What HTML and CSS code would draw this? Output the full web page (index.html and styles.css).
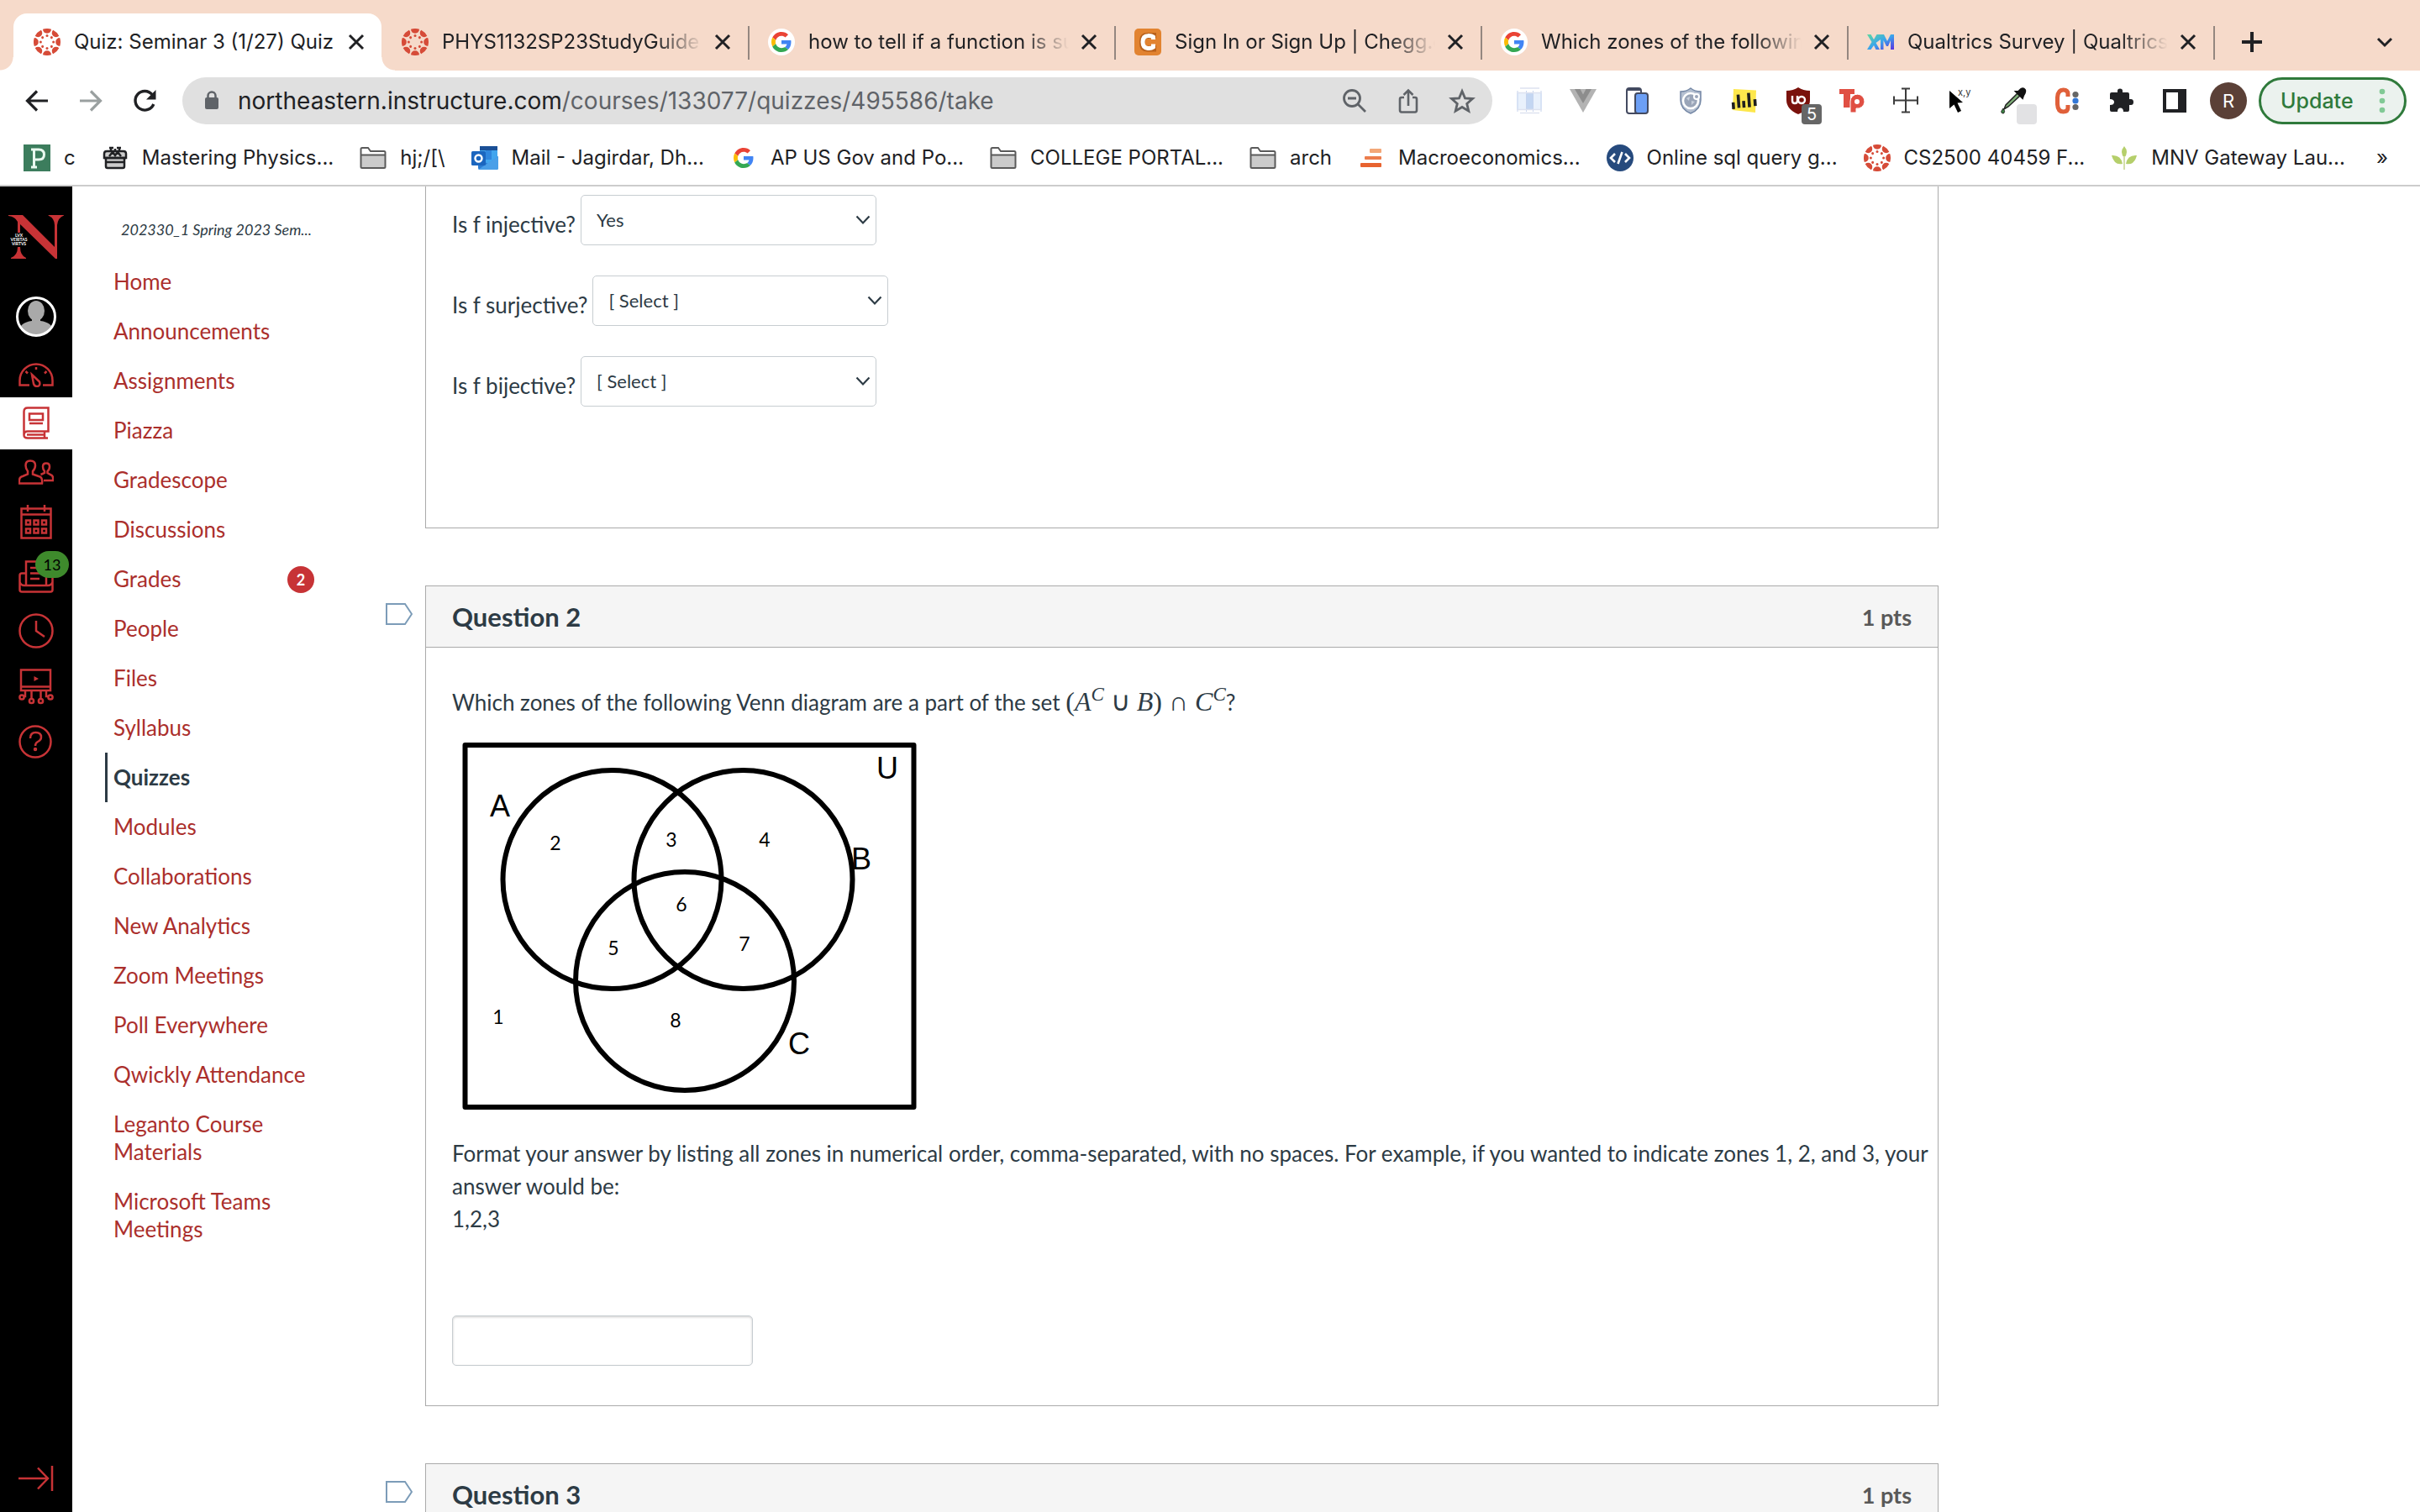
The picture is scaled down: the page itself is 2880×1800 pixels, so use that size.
FILE: index.html
```html
<!DOCTYPE html>
<html lang="en">
<head>
<meta charset="utf-8">
<meta name="viewport" content="width=device-width, initial-scale=1">
<title>Quiz: Seminar 3 (1/27) Quiz</title>
<link rel="stylesheet" href="styles.css">
</head>
<body>
<svg class="sprite" aria-hidden="true">
  <defs>
    <g id="lobe"><path d="M-5 -15.2A16 16 0 0 1 5 -15.2A5 5 0 0 1 -5 -15.2Z"/><circle cy="-7.6" r="1.5"/></g>
    <symbol id="canvas" viewBox="-16 -16 32 32">
      <g fill="#d64b38">
        <use href="#lobe"/><use href="#lobe" transform="rotate(45)"/><use href="#lobe" transform="rotate(90)"/><use href="#lobe" transform="rotate(135)"/>
        <use href="#lobe" transform="rotate(180)"/><use href="#lobe" transform="rotate(225)"/><use href="#lobe" transform="rotate(270)"/><use href="#lobe" transform="rotate(315)"/>
      </g>
    </symbol>
    <symbol id="google" viewBox="0 0 48 48">
      <path fill="#ea4335" d="M24 9.500c3.540 0 6.710 1.220 9.210 3.600l6.850-6.850C35.900 2.380 30.470 0 24 0 14.620 0 6.510 5.380 2.560 13.220l7.980 6.190C12.430 13.720 17.740 9.500 24 9.500z"/>
      <path fill="#4285f4" d="M46.980 24.550c0-1.570-.15-3.090-.38-4.550H24v9.020h12.940c-.58 2.960-2.260 5.480-4.780 7.180l7.730 6c4.510-4.180 7.090-10.360 7.090-17.650z"/>
      <path fill="#fbbc05" d="M10.530 28.590c-.48-1.450-.76-2.990-.76-4.590s.27-3.140.76-4.590l-7.980-6.190C.92 16.460 0 20.120 0 24c0 3.880.92 7.540 2.560 10.780z"/>
      <path fill="#34a853" d="M24 48c6.480 0 11.930-2.130 15.890-5.810l-7.730-6c-2.150 1.450-4.920 2.300-8.160 2.300-6.260 0-11.570-4.220-13.470-9.910l-7.980 6.190C6.510 42.620 14.620 48 24 48z"/>
    </symbol>
    <symbol id="google-round" viewBox="0 0 32 32"><circle cx="16" cy="16" r="16" fill="#fff"/><use href="#google" x="4" y="4" width="24" height="24"/></symbol>
    <symbol id="close" viewBox="0 0 32 32"><path d="M8 8L24 24M24 8L8 24" stroke="#202124" stroke-width="3" fill="none"/></symbol>
    <symbol id="folder" viewBox="0 0 32 32"><path d="M1.500 27V5.500Q1.500 4 3 4H10L13 8H29Q30.500 8 30.500 9.500V27Q30.500 28 29 28H3Q1.500 28 1.500 27Z" fill="#cbcbcb"/><path d="M2 5H10L13 8.500H30V12H2Z" fill="#fff"/><path d="M1.500 26V5.500Q1.500 4 3 4H10L13 8H29Q30.500 8 30.500 9.500V26.500Q30.500 28 29 28H3Q1.500 28 1.500 26.500ZM2 12.500H30" fill="none" stroke="#5a5a5a" stroke-width="2"/></symbol>
    <symbol id="chevron" viewBox="0 0 18 12"><path d="M1.500 1.500L9 9.500L16.500 1.500" fill="none" stroke="#2d3b45" stroke-width="2.200"/></symbol>
  </defs>
</svg>

<header class="browser">
  <div class="tabs" role="tablist">
    <div class="tab active" role="tab" aria-selected="true"><svg class="i32"><use href="#canvas"/></svg><span class="tab-label">Quiz: Seminar 3 (1/27) Quiz</span><button class="plain" aria-label="Close tab"><svg class="i32"><use href="#close"/></svg></button></div>
    <div class="tab" role="tab"><svg class="i32"><use href="#canvas"/></svg><span class="tab-label">PHYS1132SP23StudyGuide</span><button class="plain" aria-label="Close tab"><svg class="i32"><use href="#close"/></svg></button></div>
    <div class="tab ruled" role="tab"><svg class="i32"><use href="#google-round"/></svg><span class="tab-label">how to tell if a function is su</span><button class="plain" aria-label="Close tab"><svg class="i32"><use href="#close"/></svg></button></div>
    <div class="tab ruled" role="tab"><svg class="i32" viewBox="0 0 32 32"><rect width="32" height="32" rx="5" fill="#e28330"/><path d="M22.500 11.500V8.500H15.500Q9.500 8.500 9.500 14.500V18Q9.500 24 15.500 24H22.500V20" fill="none" stroke="#b9611b" stroke-width="7"/><path d="M22.500 13V10Q20 8 16 8.500Q10 9 10 16Q10 23 16 23.500Q20 24 22.500 22V18.500" fill="none" stroke="#fff" stroke-width="5"/></svg><span class="tab-label">Sign In or Sign Up | Chegg.c</span><button class="plain" aria-label="Close tab"><svg class="i32"><use href="#close"/></svg></button></div>
    <div class="tab ruled" role="tab"><svg class="i32"><use href="#google-round"/></svg><span class="tab-label">Which zones of the followin</span><button class="plain" aria-label="Close tab"><svg class="i32"><use href="#close"/></svg></button></div>
    <div class="tab ruled" role="tab"><svg class="i32" viewBox="0 0 32 32"><defs><linearGradient id="xm" x1="0" y1="0" x2="1" y2="1"><stop offset="0" stop-color="#5fd8a0"/><stop offset=".5" stop-color="#3aa5ec"/><stop offset="1" stop-color="#5a2fe0"/></linearGradient></defs><path d="M0 7H4.500L8 13L11.500 7H20L24 15L28 7H32V25H28V14L25 21H23L19.500 14V25H16V13L10.500 17L15 25H10.500L8 20L4.500 25H0L5.500 16Z" fill="url(#xm)"/></svg><span class="tab-label">Qualtrics Survey | Qualtrics</span><button class="plain" aria-label="Close tab"><svg class="i32"><use href="#close"/></svg></button></div>
    <div class="tab-end">
      <button class="plain" aria-label="New tab"><svg class="i32" viewBox="0 0 32 32"><path d="M16 4V28M4 16H28" stroke="#202124" stroke-width="4"/></svg></button>
      <button class="plain" aria-label="Search tabs"><svg class="i32" viewBox="0 0 32 32"><path d="M8 12L16 20L24 12" fill="none" stroke="#202124" stroke-width="3"/></svg></button>
    </div>
  </div>

  <div class="toolbar">
    <div class="history">
      <button class="plain" aria-label="Back"><svg class="i32" viewBox="0 0 32 32"><path d="M29 16H5M16 4.500L4.500 16L16 27.500" fill="none" stroke="#202124" stroke-width="3.200"/></svg></button>
      <button class="plain" aria-label="Forward"><svg class="i32" viewBox="0 0 32 32"><path d="M3 16H27M16 4.500L27.500 16L16 27.500" fill="none" stroke="#9aa0a0" stroke-width="3.200"/></svg></button>
      <button class="plain" aria-label="Reload"><svg class="i32" viewBox="0 0 32 32"><path d="M25 8.500A11.300 11.300 0 1 0 26.800 20" fill="none" stroke="#202124" stroke-width="3.400"/><path d="M29.500 3V14.500H18Z" fill="#202124"/></svg></button>
    </div>
    <div class="omnibox">
      <svg class="lock" viewBox="0 0 18 24"><rect x="1" y="8" width="16" height="14" rx="2" fill="#5f6368"/><path d="M4.500 9V6A4.500 4.500 0 0 1 13.500 6V9" fill="none" stroke="#5f6368" stroke-width="2.500"/></svg>
      <span class="url">northeastern.instructure.com<span class="path">/courses/133077/quizzes/495586/take</span></span>
      <button class="plain" aria-label="Zoom"><svg class="i32" viewBox="0 0 32 32" fill="none" stroke="#5f6368" stroke-width="2.800"><circle cx="13" cy="13" r="9.500"/><path d="M8 13H18M20 20L29 29"/></svg></button>
      <button class="plain" aria-label="Share"><svg class="i32" viewBox="0 0 32 32" fill="none" stroke="#5f6368" stroke-width="2.600"><path d="M11 12H8Q6 12 6 14V27Q6 29.500 8 29.500H24Q26 29.500 26 27V14Q26 12 24 12H21M16 22V4M10.500 9L16 3.500L21.500 9"/></svg></button>
      <button class="plain" aria-label="Bookmark"><svg class="i32" viewBox="0 0 32 32"><path d="M16 4.500L19.500 12.800L28.500 13.500L21.700 19.400L23.800 28.200L16 23.500L8.200 28.200L10.300 19.400L3.500 13.500L12.500 12.800Z" fill="none" stroke="#5f6368" stroke-width="2.800"/></svg></button>
    </div>
    <div class="extensions">
      <button class="plain" aria-label="Page ruler"><svg class="i32" viewBox="0 0 32 32"><rect x="1" y="6" width="30" height="21" fill="#e9f1fc"/><path d="M12.500 6H20.500V27H12.500Z" fill="#c3d6f2"/><path d="M2 4V29M30 4V29M12.500 4V29M20.500 4V29" stroke="#c6d4ee" stroke-width="1"/><path d="M5 1H28M5 30.500H28M1 6.500H31M1 26.500H31" stroke="#dde2f0" stroke-width="1.500"/></svg></button>
      <button class="plain" aria-label="Vue devtools"><svg class="i32" viewBox="0 0 32 32"><path d="M0 2H32L16 30Z" fill="#b3b3b3"/><path d="M6 2H12.500L16 8.500L19.500 2H26L16 19Z" fill="#8d8d8d"/></svg></button>
      <button class="plain" aria-label="Responsive viewer"><svg class="i32" viewBox="0 0 32 32"><rect x="4" y="1" width="17" height="30" rx="3" fill="#fff" stroke="#434a60" stroke-width="2"/><path d="M4 2.500H20" stroke="#434a60" stroke-width="3"/><rect x="14" y="7" width="15" height="24" rx="3" fill="#6c9ff5" stroke="#434a60" stroke-width="2"/></svg></button>
      <button class="plain" aria-label="Privacy shield"><svg class="i32" viewBox="0 0 32 32"><path d="M16 1Q21 5 28 5V15Q28 26 16 31Q4 26 4 15V5Q11 5 16 1Z" fill="#b4bfd0" stroke="#7487a5" stroke-width="1.500"/><circle cx="16" cy="16" r="9" fill="#9aa5b8" stroke="#fff" stroke-width="2.500"/><path d="M11 13L15 11L14 16ZM17 16L21 17L17 21Z" fill="#c9d0dc"/><circle cx="23" cy="11" r="3" fill="#9aa5b8" stroke="#fff" stroke-width="2"/></svg></button>
      <button class="plain" aria-label="Analytics"><svg class="i32" viewBox="0 0 32 32"><path d="M3 2L30 3.500L29 30L2 27Z" fill="#fde74c"/><path d="M2.500 17V25M9 8V24M15 16V24M21.500 7V24M28.500 15V23" stroke="#1e1e1e" stroke-width="3.600" transform="rotate(-4 16 16)"/></svg></button>
      <button class="plain with-badge" aria-label="uBlock Origin, 5 blocked"><svg class="i32" viewBox="0 0 32 32"><path d="M16 0Q22 4 30 4V15Q30 26 16 32Q2 26 2 15V4Q10 4 16 0Z" fill="#7a120c"/><path d="M9 10V16Q9 19 12 19Q15 19 15 16V10" fill="none" stroke="#fff" stroke-width="2.400"/><circle cx="20" cy="15" r="4" fill="none" stroke="#fff" stroke-width="2.400"/></svg><span class="ext-badge">5</span></button>
      <button class="plain" aria-label="Toggl"><svg class="i32" viewBox="0 0 32 32"><path d="M1 2H19V8H14V24H6V8H1Z" fill="#e04f43"/><path d="M14 30V17A8.500 8.500 0 1 1 21 25V30Z" fill="#e04f43" stroke="#fff" stroke-width="1"/><circle cx="22" cy="17" r="3" fill="#fff"/></svg></button>
      <button class="plain" aria-label="Dimensions"><svg class="i32" viewBox="0 0 32 32"><path d="M16 1V30M1.500 15.500H30.500M11 1.500H21M11 29.500H21M2 10.500V20.500M30 10.500V20.500" stroke="#3c3c3c" stroke-width="2"/></svg></button>
      <button class="plain" aria-label="Coordinates"><svg class="i32" viewBox="0 0 32 32" overflow="visible"><path d="M4 4L20 18L13.500 18.500L18 28L14 30L9.500 20.500L4 25Z" fill="#000"/><text x="14" y="10" font-size="11" fill="#333" font-family="Inter, sans-serif">x,y</text></svg></button>
      <button class="plain with-badge" aria-label="Colour picker"><svg class="i32" viewBox="0 0 32 32"><path d="M21 7L7 21L5 26L10 23L24 10Z" fill="#7fae78" stroke="#222" stroke-width="1.500"/><path d="M19 5L27 13L28 10Q31 6 30 3Q28 0 25 2L22 5Z" fill="#111" stroke="#111" stroke-width="2"/><path d="M4 25Q7 29 4.500 31Q1 31 2 28Z" fill="#3d8b45" stroke="#222"/></svg><span class="ext-badge swatch"></span></button>
      <button class="plain" aria-label="Clockify"><svg class="i32" viewBox="0 0 32 32"><path d="M17 11V8Q17 3 11.500 3Q5 3 4.500 12V20Q5 29 11.500 29Q17 29 17 24V21" fill="none" stroke="#e0603a" stroke-width="5"/><circle cx="26" cy="8.500" r="3.600" fill="#666"/><circle cx="26" cy="16" r="3.600" fill="#3377d6"/><circle cx="26" cy="23.500" r="3.600" fill="#666"/></svg></button>
      <button class="plain" aria-label="Extensions"><svg class="i32" viewBox="0 0 32 32"><path d="M9 6H12V4Q12 1.500 15 1.500Q18 1.500 18 4V6H24Q26 6 26 8V14H28Q31 14 31 17.500Q31 21 28 21H26V27Q26 29 24 29H19Q19 24.500 15.500 24.500Q12 24.500 12 29H5Q3 29 3 27V21Q8 21 8 17.500Q8 14 3 14V8Q3 6 5 6Z" fill="#202124"/></svg></button>
      <button class="plain" aria-label="Side panel"><svg class="i32" viewBox="0 0 32 32"><path d="M2 2H30V30H2ZM6 6V26H20V6Z" fill="#202124" fill-rule="evenodd"/></svg></button>
    </div>
    <button class="avatar">R</button>
    <button class="update">Update<svg width="8" height="30" viewBox="0 0 8 30" fill="#81c995"><circle cx="4" cy="4" r="3.300"/><circle cx="4" cy="15" r="3.300"/><circle cx="4" cy="26" r="3.300"/></svg></button>
  </div>

  <nav class="bookmarks" aria-label="Bookmarks">
    <a href="#"><svg class="i32" viewBox="0 0 32 32"><rect width="32" height="32" fill="#3c7d5d"/><path d="M12.500 27V6H18Q24.500 6 24.500 12Q24.500 18 18 18H14M9 27H16M9 6H13" fill="none" stroke="#eafaf0" stroke-width="3"/></svg>c</a>
    <a href="#"><svg class="i32" viewBox="0 0 32 32"><path d="M3 11Q3 8 6 8H26Q29 8 29 11V16H3ZM5 16H27V26Q27 28 25 28H7Q5 28 5 26Z" fill="#ccc" stroke="#202124" stroke-width="2.500"/><path d="M3 16H29M5 21H27M9 14L13 9L16 13L19 9L23 14M11 8V4M16 8V5M21 8V4M9 4H14M18 4H23" stroke="#202124" stroke-width="2.500" fill="none"/></svg>Mastering Physics...</a>
    <a href="#"><svg class="i32"><use href="#folder"/></svg>hj;/[\</a>
    <a href="#"><svg class="i32" viewBox="0 0 32 32"><rect x="10" y="2" width="21" height="24" fill="#41a5ee"/><rect x="10" y="2" width="21" height="5" fill="#1a4f96"/><path d="M17 7H24V18H17Z" fill="#2f86dd"/><path d="M8 17L20 23L32 14V28Q32 30 30 30H10Q8 30 8 28Z" fill="#2b7cd3"/><path d="M32 14L8 30H30Q32 30 32 28Z" fill="#4a9fe8"/><rect x="0" y="8" width="17" height="17" rx="1.500" fill="#1b66bf"/><circle cx="8.500" cy="16.500" r="4" fill="none" stroke="#fff" stroke-width="2.400"/></svg>Mail - Jagirdar, Dh...</a>
    <a href="#"><svg class="i32" viewBox="0 0 32 32"><use href="#google" x="4" y="4" width="24" height="24"/></svg>AP US Gov and Po...</a>
    <a href="#"><svg class="i32"><use href="#folder"/></svg>COLLEGE PORTAL...</a>
    <a href="#"><svg class="i32"><use href="#folder"/></svg>arch</a>
    <a href="#"><svg class="i32" viewBox="0 0 32 32"><rect x="14" y="5" width="14" height="5" rx="1" fill="#f3a778"/><rect x="8" y="14" width="20" height="4" rx="1" fill="#ec7d4d"/><rect x="3" y="22" width="25" height="5" rx="1" fill="#e8632f"/></svg>Macroeconomics...</a>
    <a href="#"><svg class="i32" viewBox="0 0 32 32"><circle cx="16" cy="16" r="16" fill="#264a7d"/><path d="M10 11L5 16L10 21M22 11L27 16L22 21M18.500 9L13.500 23" fill="none" stroke="#fff" stroke-width="2.600"/></svg>Online sql query g...</a>
    <a href="#"><svg class="i32"><use href="#canvas"/></svg>CS2500 40459 F...</a>
    <a href="#"><svg class="i32" viewBox="0 0 32 32"><path d="M16 2Q22 9 16 16Q10 9 16 2ZM1 13Q12 12 14 23Q4 25 1 13ZM31 13Q20 12 18 23Q28 25 31 13Z" fill="#b5cf6b"/><path d="M16 14V30" stroke="#d3dea8" stroke-width="2"/></svg>MNV Gateway Lau...</a>
    <button class="plain more" aria-label="More bookmarks">»</button>
  </nav>
</header>

<div class="page">
  <nav class="global-nav" aria-label="Global navigation">
    <a class="logo" href="#" aria-label="Northeastern"><svg width="66" height="52" viewBox="10 16 66 52"><path d="M10 16H27L65 54V28Q65 20 57.500 16.500V16H76V16.500Q69 19 68 28V68H66L24 27V37H21V24Q18 18 10 17ZM21 54H24Q24 64 31 67V68H13V67Q21 64 21 54Z" fill="#c73336"/><g font-family="Lato, sans-serif" font-size="5" font-weight="700" fill="#fff" text-anchor="middle"><text x="22.500" y="42">LVX</text><text x="22.500" y="47">VERITAS</text><text x="22.500" y="52">VIRTVS</text></g></svg></a>
    <a class="account" href="#" aria-label="Account"><svg width="48" height="48" viewBox="0 0 48 48"><defs><clipPath id="face"><circle cx="24" cy="24" r="22"/></clipPath></defs><g clip-path="url(#face)" fill="#a9a9a9"><ellipse cx="24" cy="17" rx="10" ry="12"/><path d="M19 26H29V29Q43 31 44 40V48H4V40Q5 31 19 29Z"/></g><circle cx="24" cy="24" r="22.500" fill="none" stroke="#fff" stroke-width="3"/></svg></a>
    <a href="#" aria-label="Dashboard"><svg width="42" height="29" viewBox="0 0 42 29"><path d="M13 26.500H1.500V21A19.500 19.500 0 0 1 40.500 21V26.500H29M21 5V8M8.500 10L11 12.500M33.500 10L31 12.500M16 14L25 22.500Q26.500 27.500 22 28Q19 28 18 25Z"/></svg></a>
    <a class="current" href="#" aria-label="Courses"><svg width="32" height="39" viewBox="0 0 32 39"><path d="M1.500 34V6Q1.500 1.500 6 1.500H30.500V29.500H6Q1.500 29.500 1.500 34Q1.500 37.500 6 37.500H30M26 29.500V37M5 33.500H26M8 8.500H24V16H8ZM8 20H24"/></svg></a>
    <a href="#" aria-label="Groups"><svg width="42" height="30" viewBox="0 0 42 30"><path d="M1 28.500Q0 21 5 20L11 17.500V14Q8.500 11 8.500 7Q8.500 1.500 14 1.500Q20 1.500 20 7Q20 11 17 14V17.500L24 20Q29 21 28 28.500Z"/><path d="M30 25H41Q42 19 38 18L34.500 16V14Q37 12 37 8.500Q37 4.500 33 4.500Q29 4.500 29 8.500Q29 12 31 14V16L26.500 18"/></svg></a>
    <a href="#" aria-label="Calendar"><svg width="38" height="41" viewBox="0 0 38 41"><path d="M1.500 4.500H36.500V39.500H1.500ZM1.500 11.500H36.500M9 0V8M29 0V8M7 18.500H12V23.500H7ZM16.500 18.500H21.500V23.500H16.500ZM26 18.500H31V23.500H26ZM7 28.500H12V33.500H7ZM16.500 28.500H21.500V33.500H16.500ZM26 28.500H31V33.500H26Z"/></svg></a>
    <a class="inbox" href="#" aria-label="Inbox, 13 unread"><svg width="42" height="40" viewBox="0 0 42 40"><path d="M9 30V2.500H33V30M14 10H28M14 16.500H28M14 23H25M9 16.500H4Q1.500 16.500 1.500 19V36Q1.500 38.500 4 38.500H38Q40.500 38.500 40.500 36V19Q40.500 16.500 38 16.500H33M1.500 27Q3 31 7 31H35Q39 31 40.500 27"/></svg><span class="unread">13</span></a>
    <a href="#" aria-label="History"><svg width="42" height="42" viewBox="0 0 42 42"><circle cx="21" cy="21" r="19.500"/><path d="M21 9V21L31 28"/></svg></a>
    <a href="#" aria-label="Studio"><svg width="42" height="43" viewBox="0 0 42 43"><path d="M3 1.500H38V26H3ZM3 21.500H38M8 26V33H6.500M15.500 26V36M26.500 26V36M33 26V33H35"/><circle cx="4" cy="34" r="2.600"/><circle cx="15.500" cy="38.500" r="2.600"/><circle cx="26.500" cy="38.500" r="2.600"/><circle cx="38" cy="34" r="2.600"/><path d="M18.500 9V15L24 12Z" fill="#c73336" stroke="none"/></svg></a>
    <a href="#" aria-label="Help"><svg width="42" height="40" viewBox="0 0 42 40"><circle cx="20" cy="20" r="18.500"/><path d="M14 16Q14 9 20.500 9Q27 9 27 14.500Q27 18 23 20Q20 21.500 20 25"/><circle cx="20" cy="29" r="1"/></svg></a>
    <button class="plain expand" aria-label="Expand navigation"><svg width="42" height="30" viewBox="0 0 42 30"><path d="M0 15H35M23 2.500L35 15L23 27.500M40 0V30"/></svg></button>
  </nav>

  <nav class="course-nav" aria-label="Course navigation">
    <p class="term">202330_1 Spring 2023 Sem...</p>
    <ul>
      <li><a href="#">Home</a></li>
      <li><a href="#">Announcements</a></li>
      <li><a href="#">Assignments</a></li>
      <li><a href="#">Piazza</a></li>
      <li><a href="#">Gradescope</a></li>
      <li><a href="#">Discussions</a></li>
      <li><a href="#">Grades<span class="count">2</span></a></li>
      <li><a href="#">People</a></li>
      <li><a href="#">Files</a></li>
      <li><a href="#">Syllabus</a></li>
      <li><a class="current" href="#" aria-current="page">Quizzes</a></li>
      <li><a href="#">Modules</a></li>
      <li><a href="#">Collaborations</a></li>
      <li><a href="#">New Analytics</a></li>
      <li><a href="#">Zoom Meetings</a></li>
      <li><a href="#">Poll Everywhere</a></li>
      <li><a href="#">Qwickly Attendance</a></li>
      <li><a href="#">Leganto Course Materials</a></li>
      <li><a href="#">Microsoft Teams Meetings</a></li>
    </ul>
  </nav>

  <main class="quiz">
    <section class="question continued">
      <div class="box">
        <div class="body">
          <div class="field"><label for="inj">Is f injective?</label><span class="select"><select id="inj"><option>Yes</option><option>No</option></select><svg width="18" height="12"><use href="#chevron"/></svg></span></div>
          <div class="field"><label for="sur">Is f surjective?</label><span class="select"><select id="sur"><option>[ Select ]</option><option>Yes</option><option>No</option></select><svg width="18" height="12"><use href="#chevron"/></svg></span></div>
          <div class="field"><label for="bij">Is f bijective?</label><span class="select"><select id="bij"><option>[ Select ]</option><option>Yes</option><option>No</option></select><svg width="18" height="12"><use href="#chevron"/></svg></span></div>
        </div>
      </div>
    </section>

    <section class="question">
      <button class="plain flag" aria-label="Flag question 2"><svg width="32" height="26" viewBox="0 0 32 26"><path d="M1 1H23L31 13L23 25H1Z" fill="#fff" stroke="#7c9cb8" stroke-width="2"/></svg></button>
      <div class="box">
        <div class="head"><h2>Question 2</h2><span class="pts">1 pts</span></div>
        <div class="body">
          <p>Which zones of the following Venn diagram are a part of the set <span class="math">(<i>A</i><sup>C</sup> ∪ <i>B</i>) ∩ <i>C</i><sup>C</sup></span>?</p>
          <svg class="venn" viewBox="538 868 564 466" role="img" aria-label="Venn diagram of sets A, B and C in universe U with numbered zones">
            <g fill="none" stroke="#000" stroke-width="6">
              <rect x="553.500" y="887" width="534" height="431" stroke-linejoin="round"/>
              <circle cx="728.500" cy="1047" r="130"/><circle cx="884.500" cy="1047" r="130"/><circle cx="815" cy="1168" r="130"/>
            </g>
            <g class="set-name"><text x="583" y="972">A</text><text x="1013" y="1035">B</text><text x="938" y="1255">C</text><text x="1043" y="927">U</text></g>
            <g class="zone"><text x="593" y="1219">1</text><text x="661" y="1012">2</text><text x="799" y="1008">3</text><text x="910" y="1008">4</text><text x="730" y="1137">5</text><text x="811" y="1085">6</text><text x="886" y="1132">7</text><text x="804" y="1223">8</text></g>
          </svg>
          <p>Format your answer by listing all zones in numerical order, comma-separated, with no spaces. For example, if you wanted to indicate zones 1, 2, and 3, your answer would be:<br>1,2,3</p>
          <input class="answer" type="text" aria-label="Answer to question 2">
        </div>
      </div>
    </section>

    <section class="question">
      <button class="plain flag" aria-label="Flag question 3"><svg width="32" height="26" viewBox="0 0 32 26"><path d="M1 1H23L31 13L23 25H1Z" fill="#fff" stroke="#7c9cb8" stroke-width="2"/></svg></button>
      <div class="box">
        <div class="head"><h2>Question 3</h2><span class="pts">1 pts</span></div>
      </div>
    </section>
  </main>
</div>
</body>
</html>
```
FILE: styles.css
```css
* { box-sizing: border-box; }

body {
  margin: 0;
  height: 100vh;
  display: flex;
  flex-direction: column;
  overflow: hidden;
  background: #fff;
  color: #2d3b45;
  font: 26px/39px Lato, "Noto Sans", sans-serif;
}

a { color: inherit; text-decoration: none; }
p, h2, ul { margin: 0; padding: 0; }
ul { list-style: none; }
svg { flex: none; display: block; }

.sprite { position: absolute; width: 0; height: 0; }
.i32 { width: 32px; height: 32px; }

.plain {
  flex: none;
  padding: 0;
  border: 0;
  background: none;
  color: inherit;
  font: inherit;
}

/* Browser frame */
.browser {
  flex: none;
  color: #202124;
  font: 24px/32px Inter, "Liberation Sans", sans-serif;
  border-bottom: 2px solid #ccc;
}

.tabs {
  display: flex;
  height: 84px;
  padding: 16px 26px 0 16px;
  background: #f6daca;
}

.tab {
  flex: 0 1 436px;
  min-width: 0;
  display: flex;
  align-items: center;
  padding: 0 14px 0 24px;
  position: relative;
}

.tab.active {
  flex-basis: 438px;
  background: #fff;
  border-radius: 16px 16px 0 0;
}

.tab.active::before,
.tab.active::after {
  content: "";
  position: absolute;
  bottom: 0;
  width: 16px;
  height: 16px;
}
.tab.active::before { left: -16px; background: radial-gradient(circle at 0 0, #f6daca 15px, #fff 16px); }
.tab.active::after { right: -16px; background: radial-gradient(circle at 100% 0, #f6daca 15px, #fff 16px); }

.tab.ruled::before,
.tab-end::before {
  content: "";
  position: absolute;
  left: 0;
  top: 15px;
  width: 2px;
  height: 40px;
  background: #948780;
}

.tab-label {
  flex: 1;
  min-width: 0;
  margin: 0 4px 0 16px;
  overflow: hidden;
  white-space: nowrap;
  mask-image: linear-gradient(to right, #000 calc(100% - 60px), transparent calc(100% - 4px));
}
.tab.active .tab-label { mask-image: none; }

.tab-end {
  flex: 1;
  position: relative;
  display: flex;
  align-items: center;
  justify-content: space-between;
  padding-left: 30px;
}

.toolbar {
  display: flex;
  align-items: center;
  height: 72px;
  padding: 0 16px 0 28px;
}

.history { display: flex; gap: 32px; }

.omnibox {
  flex: 1;
  display: flex;
  align-items: center;
  gap: 32px;
  height: 56px;
  margin: 0 28px 0 29px;
  padding: 0 20px 0 26px;
  border-radius: 28px;
  background: #e0e0e0;
  font-size: 28px;
}
.lock { width: 18px; height: 24px; }
.url { flex: 1; margin-left: -10px; white-space: nowrap; }
.path { color: #5f6368; }

.extensions { display: flex; gap: 32px; }
.with-badge { position: relative; }
.ext-badge {
  position: absolute;
  left: 20px;
  top: 20px;
  width: 24px;
  height: 24px;
  border-radius: 4px;
  background: #666;
  color: #fff;
  font-size: 20px;
  line-height: 24px;
}
.ext-badge.swatch { background: #e2e2e4; }

.avatar {
  flex: none;
  width: 44px;
  height: 44px;
  margin: 0 14px 0 26px;
  padding: 0;
  border: 0;
  border-radius: 50%;
  background: #5b4037;
  color: #fff;
  font: 22px/44px Inter, sans-serif;
}

.update {
  flex: none;
  display: flex;
  align-items: center;
  justify-content: space-between;
  width: 176px;
  height: 56px;
  padding: 0 22px 0 23px;
  border: 3px solid #2f7a3b;
  border-radius: 28px;
  background: #ebf2ee;
  color: #2f7a3b;
  font: 500 25px/32px Inter, sans-serif;
}

.bookmarks {
  display: flex;
  align-items: center;
  gap: 31px;
  height: 64px;
  padding: 0 38px 0 28px;
  white-space: nowrap;
}
.bookmarks a { display: flex; align-items: center; gap: 16px; }
.more { margin-left: auto; }

/* Canvas */
.page {
  flex: 1;
  min-height: 0;
  display: grid;
  grid-template-columns: 86px 373px minmax(0, 1fr);
}

.global-nav {
  display: flex;
  flex-direction: column;
  background: #000;
}
.global-nav a {
  display: flex;
  justify-content: center;
  padding: 12px 0;
}
.global-nav a > svg,
.expand svg { fill: none; stroke: #c73336; stroke-width: 2.5; }
.global-nav .logo { padding: 34px 0 33px; }
.global-nav .logo svg, .global-nav .account svg { stroke: none; }
.global-nav .account { padding-bottom: 19px; }
.global-nav .current { padding: 11px 0 12px; background: #fff; }
.inbox { position: relative; }
.unread {
  position: absolute;
  top: 2px;
  right: 4px;
  width: 40px;
  border-radius: 16px;
  background: #3e8a2c;
  color: #000;
  font-size: 18px;
  line-height: 32px;
  text-align: center;
}
.expand { margin: auto auto 25px; }

.course-nav { padding: 38px 85px 0 39px; }
.term {
  margin: 0 0 20px 19px;
  font-size: 18px;
  font-style: italic;
  line-height: 26px;
  white-space: nowrap;
}
.course-nav a {
  display: flex;
  align-items: center;
  justify-content: space-between;
  padding: 13px 0 13px 7px;
  border-left: 3px solid transparent;
  color: #ab2f2c;
  line-height: 33px;
}
.course-nav .current {
  border-color: #2d3b45;
  color: #2d3b45;
  font-weight: 700;
}
.count {
  width: 32px;
  border-radius: 50%;
  background: #c73336;
  color: #fff;
  font-size: 18px;
  font-weight: 700;
  line-height: 32px;
  text-align: center;
}

.quiz {
  display: flex;
  flex-direction: column;
  gap: 68px;
  min-height: 0;
  padding-right: 573px;
}
.question { flex: none; display: flex; align-items: flex-start; }
.flag { width: 32px; margin: 21px 15px 0 0; }
.box { flex: 1; min-width: 0; border: 1px solid #aaa; }
.continued .box { margin-left: 47px; border-top: 0; }

.head {
  display: flex;
  align-items: center;
  justify-content: space-between;
  height: 73px;
  padding: 0 31px;
  border-bottom: 1px solid #aaa;
  background: #f5f5f5;
}
h2 { font-size: 31px; line-height: 38px; }
.pts { color: #595959; font-size: 27px; font-weight: 700; }

.body { padding: 46px 8px 47px 31px; }
.continued .body {
  display: grid;
  gap: 26px;
  padding-top: 10px;
  padding-bottom: 134px;
}

.field { display: flex; align-items: center; gap: 6px; }
.select { position: relative; margin-bottom: 10px; }
.select select {
  appearance: none;
  display: block;
  width: 352px;
  height: 60px;
  padding: 0 18px;
  border: 1px solid #c7cdd1;
  border-radius: 5px;
  background: #fff;
  color: #2d3b45;
  font: 22px/32px Lato, sans-serif;
}
.select svg { position: absolute; right: 7px; top: 24px; pointer-events: none; }

.math { font-family: "Liberation Serif", serif; font-size: 32px; line-height: 0; }
.math sup { font-size: 23px; font-style: italic; line-height: 0; }

.venn { width: 564px; height: 466px; margin: 12px 0 20px; }
.set-name { font: 36px "Liberation Sans", sans-serif; }
.zone { font: 23px Lato, sans-serif; text-anchor: middle; }

.answer {
  display: block;
  width: 358px;
  height: 60px;
  margin-top: 95px;
  padding: 0 18px;
  border: 1px solid #c7cdd1;
  border-radius: 5px;
  box-shadow: inset 0 1px 3px rgba(0, 0, 0, 0.2);
  color: inherit;
  font: inherit;
}
```
